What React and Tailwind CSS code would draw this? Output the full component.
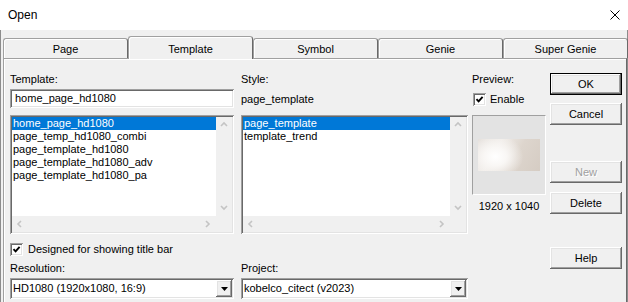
import React from "react";

const raised =
  "shadow-[inset_-1px_-1px_#696969,inset_1px_1px_#ffffff,inset_-2px_-2px_#a0a0a0,inset_2px_2px_#e3e3e3]";
const sunken =
  "shadow-[inset_1px_1px_#a0a0a0,inset_-1px_-1px_#ffffff,inset_2px_2px_#696969,inset_-2px_-2px_#e3e3e3]";

function Chevron({ dir }) {
  const pts = {
    up: "1,5 4,2 7,5",
    down: "1,2 4,5 7,2",
    left: "5,1 2,4 5,7",
    right: "2,1 5,4 2,7",
  }[dir];
  return (
    <svg width="8" height="8" viewBox="0 0 8 8">
      <polyline points={pts} fill="none" stroke="#c4c4c4" strokeWidth="1.6" />
    </svg>
  );
}

function Check() {
  return (
    <div className={`w-[13px] h-[13px] bg-white ${sunken} flex items-center justify-center`}>
      <svg width="9" height="9" viewBox="0 0 9 9">
        <path d="M1.5 4.2 L3.6 6.4 L7.6 1.8" fill="none" stroke="#000" strokeWidth="1.9" />
      </svg>
    </div>
  );
}

function ListBox({ items, className }) {
  return (
    <div className={`${className} h-[119px] bg-white ${sunken} p-[2px] flex flex-col`}>
      <div className="flex flex-1 min-h-0">
        <div className="flex-1 flex flex-col">
          {items.map((t, i) => (
            <div
              key={t}
              className={`h-[13px] leading-[13px] pl-[1px] whitespace-nowrap ${
                i === 0 ? "bg-[#0078d7] text-white" : ""
              }`}
            >
              {t}
            </div>
          ))}
        </div>
        <div className="w-[16px] bg-[#f0f0f0] flex flex-col items-center justify-between py-[4px]">
          <Chevron dir="up" />
          <Chevron dir="down" />
        </div>
      </div>
      <div className="h-[16px] flex">
        <div className="flex-1 bg-[#f0f0f0] flex items-center justify-between px-[4px]">
          <Chevron dir="left" />
          <Chevron dir="right" />
        </div>
        <div className="w-[16px] bg-[#f0f0f0]" />
      </div>
    </div>
  );
}

function Combo({ text, className }) {
  return (
    <div className={`${className} h-[21px] bg-white ${sunken} flex items-center pl-[3px] pr-[2px]`}>
      <span className="flex-1 whitespace-nowrap">{text}</span>
      <div className={`w-[16px] h-[17px] bg-[#f0f0f0] ${raised} flex items-center justify-center`}>
        <svg width="7" height="4" viewBox="0 0 7 4">
          <polygon points="0,0 7,0 3.5,4" fill="#000" />
        </svg>
      </div>
    </div>
  );
}

function Btn({ children, def, disabled, className = "" }) {
  return (
    <div
      className={`h-[22px] w-[72px] bg-[#f0f0f0] flex items-center justify-center ${raised} ${
        def ? "border border-black" : ""
      } ${disabled ? "text-[#a0a0a0] [text-shadow:1px_1px_0_#ffffff]" : ""} ${className}`}
    >
      {children}
    </div>
  );
}

function Tab({ label, selected }) {
  return (
    <div
      className={`w-[125px] flex justify-center border border-b-0 border-[#a0a0a0] border-r-[#696969] rounded-t-[3px] bg-[#f0f0f0] shadow-[inset_1px_1px_#ffffff] ${
        selected ? "h-[23px] -mb-[1px] relative z-10 pt-[6px]" : "h-[20px] pt-[4px]"
      }`}
    >
      <span className="leading-[13px]">{label}</span>
    </div>
  );
}

export default function App() {
  return (
    <div className="w-[628px] h-[302px] bg-[#f0f0f0] overflow-hidden font-['Liberation_Sans',Arial,sans-serif] text-[11px] leading-[13px] text-black flex flex-col">
      <div className="h-[30px] shrink-0 bg-white flex items-center justify-between pl-[8px] pr-[8px]">
        <span className="text-[12px] leading-[14px]">Open</span>
        <svg width="10" height="10" viewBox="0 0 10 10">
          <path d="M0.5 0.5 L9.5 9.5 M9.5 0.5 L0.5 9.5" stroke="#000" strokeWidth="1" />
        </svg>
      </div>
      <div className="flex-1 flex flex-col border-l border-r border-[#8c8c8c] pl-[2px] pr-[0px] pt-[6px]">
        <div className="h-[22px] flex items-end shrink-0">
          <Tab label="Page" />
          <Tab label="Template" selected />
          <Tab label="Symbol" />
          <Tab label="Genie" />
          <div className="w-[123px]">
            <Tab label="Super Genie" />
          </div>
        </div>
        <div className="flex-1 border border-b-0 border-[#a0a0a0] border-r-[#696969] shadow-[inset_1px_1px_#ffffff] pl-[6px] pt-[14px] flex">
          {/* left column */}
          <div className="w-[224px] flex flex-col">
            <div className="h-[13px]">Template:</div>
            <div className={`mt-[3px] h-[19px] bg-white ${sunken} flex items-center pl-[5px]`}>
              home_page_hd1080
            </div>
            <ListBox
              className="mt-[7px] w-[224px]"
              items={[
                "home_page_hd1080",
                "page_temp_hd1080_combi",
                "page_template_hd1080",
                "page_template_hd1080_adv",
                "page_template_hd1080_pa",
              ]}
            />
            <div className="mt-[9px] h-[13px] flex items-center gap-[5px]">
              <Check />
              <span>Designed for showing title bar</span>
            </div>
            <div className="mt-[6px] h-[13px]">Resolution:</div>
            <Combo className="mt-[3px] w-[224px]" text="HD1080 (1920x1080, 16:9)" />
          </div>
          {/* middle column */}
          <div className="ml-[7px] w-[227px] flex flex-col">
            <div className="h-[13px]">Style:</div>
            <div className="mt-[7px] h-[13px]">page_template</div>
            <ListBox className="mt-[9px] w-[227px]" items={["page_template", "template_trend"]} />
            <div className="mt-[9px] h-[13px]" />
            <div className="mt-[6px] h-[13px]">Project:</div>
            <Combo className="mt-[3px] w-[227px]" text="kobelco_citect (v2023)" />
          </div>
          {/* preview column */}
          <div className="ml-[4px] w-[74px] flex flex-col">
            <div className="h-[13px]">Preview:</div>
            <div className="mt-[7px] h-[13px] flex items-center gap-[4px] pl-[1px]">
              <Check />
              <span>Enable</span>
            </div>
            <div className="mt-[9px] h-[80px] bg-[#e3e3e3] border border-[#a0a0a0] border-r-white border-b-white flex items-center justify-center">
              <div className="w-[62px] h-[32px] bg-[radial-gradient(ellipse_45%_70%_at_28%_55%,#ffffff_0%,#f9f7f5_40%,rgba(249,247,245,0)_100%),linear-gradient(120deg,#e4dfdb_0%,#efebe7_30%,#ddd5cd_60%,#d5ccc3_100%)]" />
            </div>
            <div className="mt-[5px] h-[13px] text-center">1920 x 1040</div>
          </div>
          {/* buttons */}
          <div className="ml-[4px] w-[72px] flex flex-col">
            <Btn def>OK</Btn>
            <Btn className="mt-[8px]">Cancel</Btn>
            <Btn className="mt-[36px]" disabled>
              New
            </Btn>
            <Btn className="mt-[9px]">Delete</Btn>
            <Btn className="mt-[33px]">Help</Btn>
          </div>
        </div>
      </div>
    </div>
  );
}
